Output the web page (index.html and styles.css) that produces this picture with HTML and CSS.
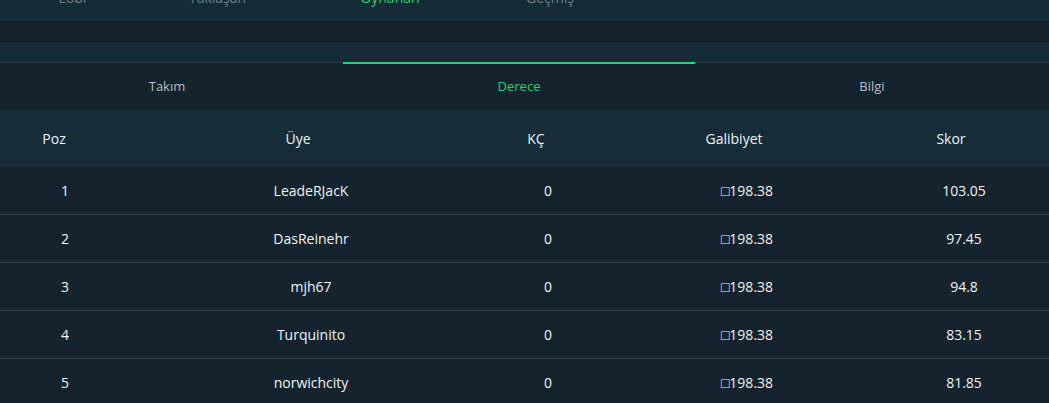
FILE: index.html
```html
<!DOCTYPE html>
<html lang="tr">
<head>
<meta charset="utf-8">
<title>Derece</title>
<link rel="stylesheet" href="styles.css">
</head>
<body>
<nav class="main-nav">
  <a class="nav-item">Lobi</a>
  <a class="nav-item">Yaklaşan</a>
  <a class="nav-item active">Oynanan</a>
  <a class="nav-item">Geçmiş</a>
</nav>
<div class="band-dark"></div>
<div class="band-light"></div>
<div class="tabs">
  <div class="tab tab-first">Takım</div>
  <div class="tab active">Derece</div>
  <div class="tab">Bilgi</div>
</div>
<div class="table">
  <div class="thead">
    <div>Poz</div><div>Üye</div><div>KÇ</div><div>Galibiyet</div><div>Skor</div>
  </div>
  <div class="row"><div>1</div><div>LeadeRJacK</div><div>0</div><div>□198.38</div><div>103.05</div></div>
  <div class="row"><div>2</div><div>DasReinehr</div><div>0</div><div>□198.38</div><div>97.45</div></div>
  <div class="row"><div>3</div><div>mjh67</div><div>0</div><div>□198.38</div><div>94.8</div></div>
  <div class="row"><div>4</div><div>Turquinito</div><div>0</div><div>□198.38</div><div>83.15</div></div>
  <div class="row"><div>5</div><div>norwichcity</div><div>0</div><div>□198.38</div><div>81.85</div></div>
</div>
</body>
</html>
```
FILE: styles.css
```css
* { box-sizing: border-box; }
html, body {
  margin: 0;
  padding: 0;
  background: #14232e;
  font-family: "Open Sans", "Noto Sans", sans-serif;
  overflow: hidden;
}
.main-nav {
  display: grid;
  grid-template-columns: 145px 145px 200px 120px 1fr;
  margin-top: -21px;
  height: 42px;
  background: #162b38;
  align-items: center;
}
.nav-item {
  text-align: center;
  font-size: 14px;
  line-height: 20px;
  color: #6f7f89;
  margin-top: -4px;
}
.nav-item.active { color: #1fd76a; }
.band-dark {
  height: 21px;
  background: #13222c;
  border-top: 1px dotted #101c24;
  border-bottom: 1px solid #111d25;
}
.band-light {
  height: 20px;
  background: #162b38;
}
.tabs {
  position: relative;
  display: grid;
  grid-template-columns: 343px 352px 1fr;
  height: 48px;
  border-top: 1px solid #2c3f4a;
  background: #14232e;
  align-items: center;
}
.tab {
  text-align: center;
  font-size: 13px;
  color: #b4bec4;
  padding-bottom: 2px;
}
.tab-first { padding-right: 9px; }
.tab.active {
  position: relative;
  color: #1fd76a;
  align-self: stretch;
  display: flex;
  align-items: center;
  justify-content: center;
}
.tab.active::before {
  content: "";
  position: absolute;
  left: 0;
  right: 0;
  top: -1px;
  height: 2px;
  background: #1fd76a;
}
.thead, .row {
  display: grid;
  align-items: center;
  text-align: center;
  font-size: 14px;
  color: #eef3f5;
}
.thead {
  grid-template-columns: 108px 380px 96px 300px 134px;
  height: 57px;
  background: #162c39;
}
.row {
  grid-template-columns: 130px 362px 112px 286px 148px;
  height: 48px;
  border-bottom: 1px solid #2e414c;
  background: #14232e;
}
```
